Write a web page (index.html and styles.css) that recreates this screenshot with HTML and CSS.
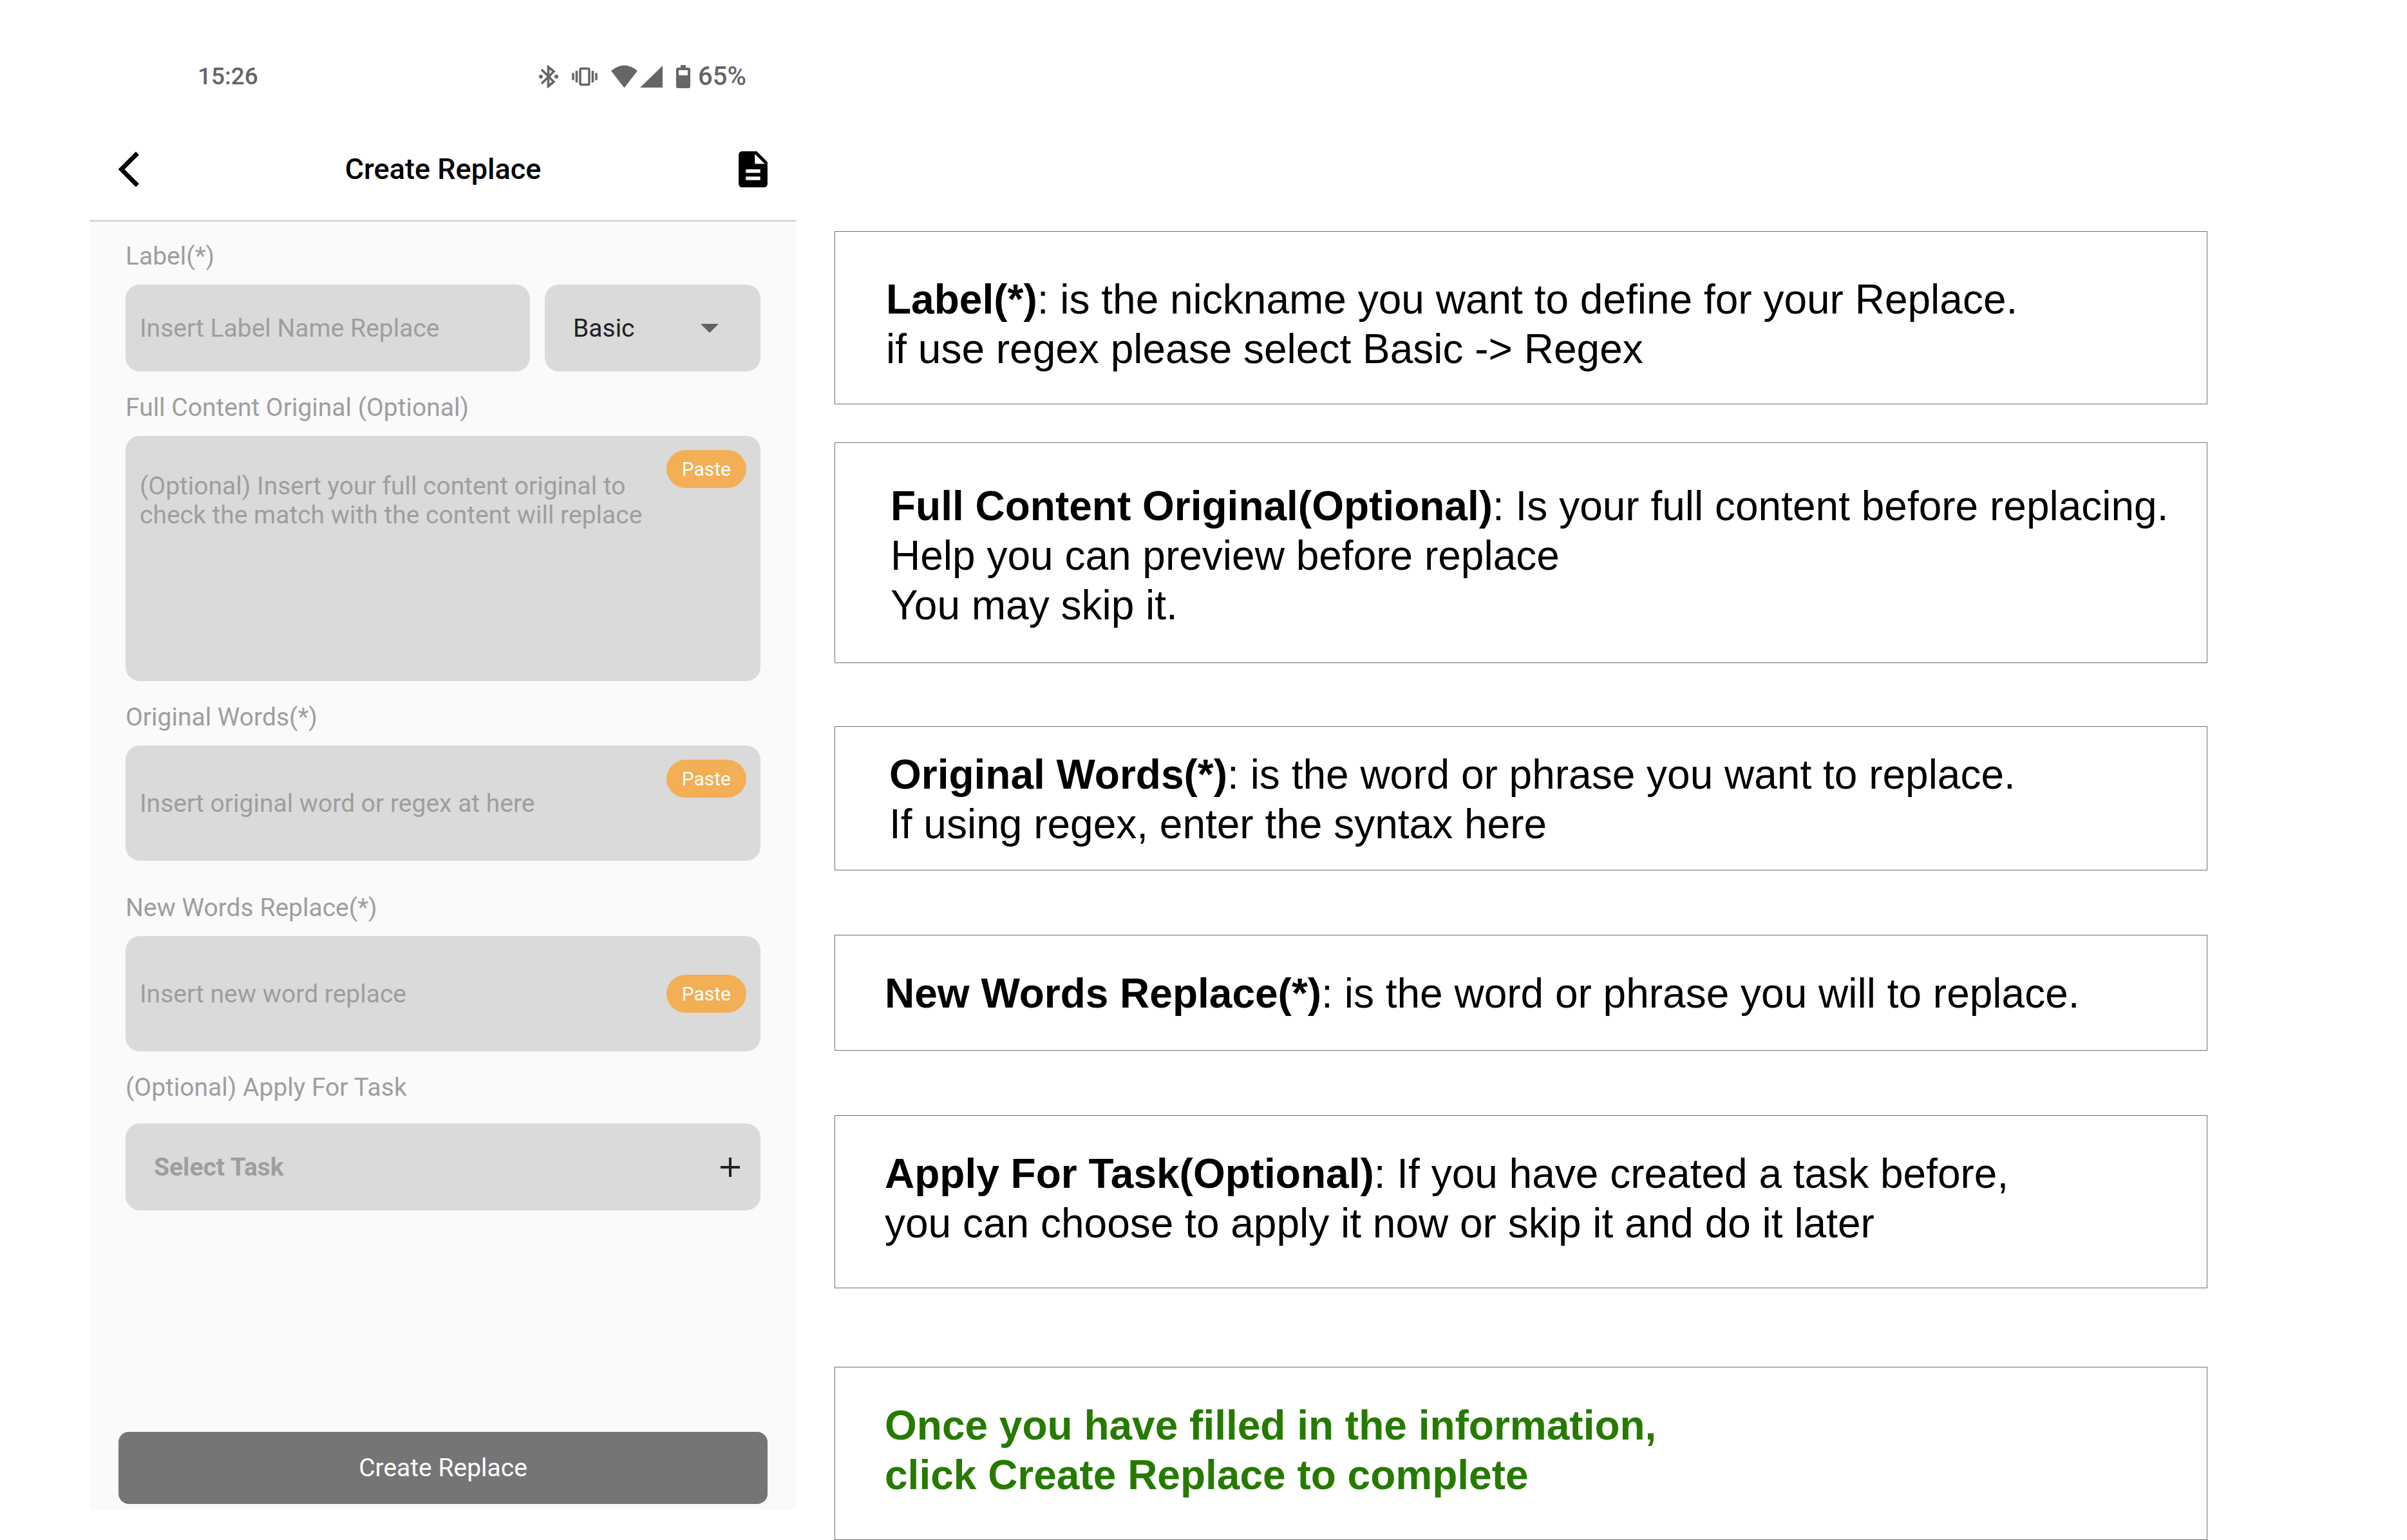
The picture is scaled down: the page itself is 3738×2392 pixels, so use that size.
FILE: index.html
```html
<!DOCTYPE html>
<html lang="en">
<head>
<meta charset="utf-8">
<meta name="viewport" content="width=device-width, initial-scale=1">
<title>Create Replace</title>
<link rel="stylesheet" href="styles.css">
</head>
<body>
<main class="guide">
  <section class="phone">
    <div class="status">
      <span class="clock">15:26</span>
      <div class="status-icons">
        <svg class="bluetooth" width="30" height="36" viewBox="0 0 30 36" aria-hidden="true"><path d="M4 7 23 26 14.500 33V3L23 10 4 29" fill="none" stroke="currentColor" stroke-width="3.600"/><circle cx="3" cy="18" r="3" fill="currentColor"/><circle cx="27" cy="18" r="3" fill="currentColor"/></svg>
        <svg class="vibrate" width="40" height="36" viewBox="0 0 40 36" aria-hidden="true"><rect x="13" y="5.500" width="14" height="25" rx="2" fill="none" stroke="currentColor" stroke-width="3.500"/><path d="M2 12.500v11M7.500 9v18M32.500 9v18M38 12.500v11" stroke="currentColor" stroke-width="3.600"/></svg>
        <svg class="wifi" width="41" height="36" viewBox="0 0 41 36" aria-hidden="true"><path d="M0 9Q20.500-8 41 9L20.500 35.500z" fill="currentColor"/></svg>
        <svg class="signal" width="35" height="36" viewBox="0 0 35 36" aria-hidden="true"><path d="M35 1v34H0z" fill="currentColor"/></svg>
        <svg class="battery" width="22" height="36" viewBox="0 0 22 36" aria-hidden="true"><path fill-rule="evenodd" d="M7 0h8v4h4q3 0 3 3v26q0 3-3 3H3q-3 0-3-3V7q0-3 3-3h4zM4 8v8h14V8z" fill="currentColor"/></svg>
        <span class="percent">65%</span>
      </div>
    </div>
    <header class="appbar">
      <button class="icon-button" type="button" aria-label="Back">
        <svg width="33" height="56" viewBox="0 0 33 56" aria-hidden="true"><path d="M29.500 3 4.500 28l25 25" fill="none" stroke="currentColor" stroke-width="7"/></svg>
      </button>
      <h1 class="title">Create Replace</h1>
      <button class="icon-button end" type="button" aria-label="Document">
        <svg width="45" height="56" viewBox="4 2 16 20" aria-hidden="true"><path d="M14 2H6c-1.100 0-1.990.9-1.990 2L4 20c0 1.100.89 2 1.990 2H18c1.100 0 2-.9 2-2V8l-6-6zm2 16H8v-2h8v2zm0-4H8v-2h8v2zm-3-5V3.500L18.500 9H13z" fill="currentColor"/></svg>
      </button>
    </header>
    <form class="form">
      <div class="fields">
        <div class="field">
          <label class="label" for="name">Label(*)</label>
          <div class="row">
            <input class="box" id="name" type="text" placeholder="Insert Label Name Replace">
            <div class="picker">
              <select class="box select" aria-label="Replace type">
                <option>Basic</option>
                <option>Regex</option>
              </select>
              <svg class="caret" width="28" height="14" viewBox="0 0 28 14" aria-hidden="true"><path d="M0 0h28L14 14z" fill="currentColor"/></svg>
            </div>
          </div>
        </div>
        <div class="field">
          <label class="label" for="content">Full Content Original (Optional)</label>
          <div class="paste-box">
            <textarea class="box content" id="content" placeholder="(Optional) Insert your full content original to check the match with the content will replace"></textarea>
            <button class="paste" type="button">Paste</button>
          </div>
        </div>
        <div class="field">
          <label class="label" for="original">Original Words(*)</label>
          <div class="paste-box">
            <input class="box tall" id="original" type="text" placeholder="Insert original word or regex at here">
            <button class="paste" type="button">Paste</button>
          </div>
        </div>
        <div class="field spaced">
          <label class="label" for="replacement">New Words Replace(*)</label>
          <div class="paste-box">
            <input class="box tall" id="replacement" type="text" placeholder="Insert new word replace">
            <button class="paste middle" type="button">Paste</button>
          </div>
        </div>
        <div class="field loose">
          <label class="label" for="task">(Optional) Apply For Task</label>
          <button class="box task" id="task" type="button">
            <span>Select Task</span>
            <svg width="30" height="30" viewBox="0 0 30 30" aria-hidden="true"><path d="M15 0v30M0 15h30" stroke="#212121" stroke-width="4"/></svg>
          </button>
        </div>
      </div>
      <button class="submit" type="submit">Create Replace</button>
    </form>
  </section>

  <section class="notes">
    <p class="note note-label"><b>Label(*)</b>: is the nickname you want to define for your Replace.<br>if use regex please select Basic -&gt; Regex</p>
    <p class="note note-content"><b>Full Content Original(Optional)</b>: Is your full content before replacing.<br>Help you can preview before replace<br>You may skip it.</p>
    <p class="note note-original"><b>Original Words(*)</b>: is the word or phrase you want to replace.<br>If using regex, enter the syntax here</p>
    <p class="note note-new"><b>New Words Replace(*)</b>: is the word or phrase you will to replace.</p>
    <p class="note note-task"><b>Apply For Task(Optional)</b>: If you have created a task before,<br>you can choose to apply it now or skip it and do it later</p>
    <p class="note note-done"><b>Once you have filled in the information,<br>click Create Replace to complete</b></p>
  </section>
</main>
</body>
</html>
```
FILE: styles.css
```css
* {
  box-sizing: border-box;
}

body {
  margin: 0;
  background: #fff;
  color: #000;
  font-family: Roboto, sans-serif;
  font-size: 39px;
}

button,
input,
select,
textarea {
  margin: 0;
  border: 0;
  font: inherit;
}

svg {
  display: block;
}

.guide {
  display: grid;
  grid-template-columns: minmax(0, 1098fr) minmax(0, 2132fr);
  gap: 59px;
  padding: 0 310px 0 139px;
}

/* Phone screen */
.phone {
  display: flex;
  flex-direction: column;
  margin-bottom: 48px;
}

.status {
  display: flex;
  align-items: center;
  justify-content: space-between;
  padding: 95px 78px 42px 168px;
  color: #666;
  font-weight: 500;
  line-height: 48px;
}

.clock {
  font-size: 37px;
}

.status-icons {
  display: flex;
  align-items: center;
}

.vibrate,
.wifi,
.battery {
  margin-left: 21px;
}

.signal {
  margin-left: 4px;
}

.percent {
  margin-left: 12px;
  font-size: 40px;
}

.appbar {
  display: grid;
  grid-template-columns: 1fr auto 1fr;
  align-items: center;
  padding: 50px 45px 51px;
  border-bottom: 2px solid #ccc;
}

.title {
  margin: 0;
  font-size: 45px;
  font-weight: 500;
  line-height: 56px;
}

.icon-button {
  justify-self: start;
  padding: 0;
  background: none;
  color: #000;
}

.icon-button.end {
  justify-self: end;
}

.form {
  display: flex;
  flex: 1;
  flex-direction: column;
  justify-content: space-between;
  padding: 30px 45px 8px;
  background: #fafafa;
}

.fields {
  display: flex;
  flex-direction: column;
  gap: 32px;
  padding: 0 11px;
}

.field {
  display: flex;
  flex-direction: column;
  gap: 20px;
}

.field.spaced {
  margin-top: 17px;
}

.field.loose {
  gap: 32px;
}

.label {
  color: #9e9e9e;
  line-height: 48px;
}

.row {
  display: grid;
  grid-template-columns: minmax(0, 628fr) minmax(0, 335fr);
  gap: 23px;
}

.box {
  display: block;
  width: 100%;
  height: 135px;
  padding: 0 22px;
  border-radius: 22px;
  background: #dadada;
  color: #212121;
}

.box::placeholder {
  color: #9e9e9e;
  opacity: 1;
}

.box.tall {
  height: 179px;
  padding-right: 160px;
}

.box.content {
  height: 381px;
  padding: 56px 160px 22px 22px;
  line-height: 45px;
  resize: none;
}

.picker {
  position: relative;
}

.select {
  padding: 0 44px;
  appearance: none;
}

.caret {
  position: absolute;
  top: 61px;
  right: 65px;
  color: #616161;
  pointer-events: none;
}

.paste-box {
  position: relative;
}

.paste {
  position: absolute;
  top: 22px;
  right: 22px;
  padding: 0 24px;
  border-radius: 30px;
  background: #f3af56;
  color: #fff;
  font-size: 30px;
  line-height: 59px;
}

.paste.middle {
  top: 60px;
}

.task {
  display: flex;
  align-items: center;
  justify-content: space-between;
  padding: 0 32px 0 44px;
  color: #9e9e9e;
  font-weight: 700;
}

.submit {
  height: 112px;
  border-radius: 16px;
  background: #757575;
  color: #fff;
}

/* Explanations beside the screen */
.notes {
  display: flex;
  flex-direction: column;
  padding-top: 359px;
  font-family: "Liberation Sans", Arial, sans-serif;
  font-size: 64px;
  line-height: 77px;
}

.note {
  margin: 0;
  border: 1px solid #707070;
}

.note-label {
  padding: 67px 20px 46px 79px;
}

.note-content {
  margin-top: 59px;
  padding: 60px 20px 50px 86px;
}

.note-original {
  margin-top: 98px;
  padding: 36px 20px 32px 84px;
}

.note-new {
  margin-top: 100px;
  padding: 52px 20px 49px 77px;
}

.note-task {
  margin-top: 100px;
  padding: 52px 20px 61px 77px;
}

.note-done {
  margin-top: 122px;
  padding: 52px 20px 61px 77px;
  color: #267a00;
}
```
